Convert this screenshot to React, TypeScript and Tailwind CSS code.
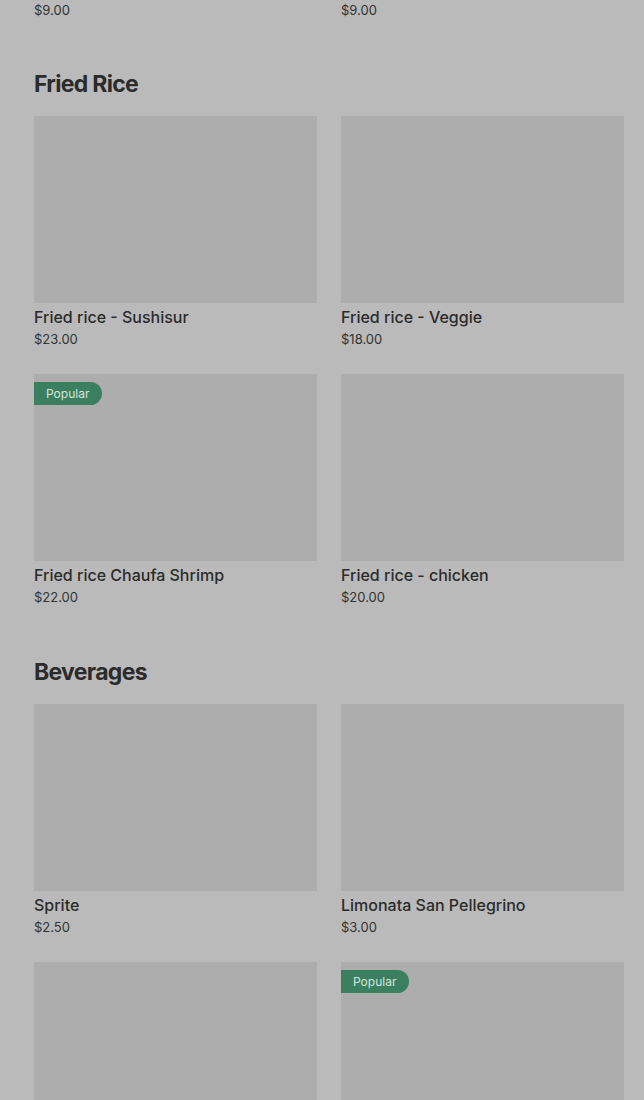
type Item = {
  name: string;
  price: string;
  popular?: boolean;
};

type Section = {
  title?: string;
  items: Item[];
};

const sections: Section[] = [
  {
    items: [
      { name: "Miso soup", price: "$9.00" },
      { name: "Seaweed salad", price: "$9.00" },
    ],
  },
  {
    title: "Fried Rice",
    items: [
      { name: "Fried rice - Sushisur", price: "$23.00" },
      { name: "Fried rice - Veggie", price: "$18.00" },
      { name: "Fried rice Chaufa Shrimp", price: "$22.00", popular: true },
      { name: "Fried rice - chicken", price: "$20.00" },
    ],
  },
  {
    title: "Beverages",
    items: [
      { name: "Sprite", price: "$2.50" },
      { name: "Limonata San Pellegrino", price: "$3.00" },
      { name: "Coca-Cola", price: "$2.50" },
      { name: "Perrier", price: "$3.00", popular: true },
    ],
  },
];

const MenuCard = ({ item }: { item: Item }) => (
  <div className="flex flex-col">
    <div className="relative h-[187px] bg-[#adadad]">
      {item.popular && (
        <span className="absolute left-0 top-2 flex h-[23px] items-center rounded-r-full bg-[#3a8060] pl-3 pr-[13px] text-[12px] text-[#d6e5dc]">
          Popular
        </span>
      )}
    </div>
    <p className="mt-0.5 text-[16px] leading-6 font-medium text-[#2b2b2b]">
      {item.name}
    </p>
    <p className="text-[13px] leading-5 text-[#333333]">{item.price}</p>
  </div>
);

export default function App() {
  return (
    <div
      className="min-h-[1100px] overflow-hidden bg-[#bababa] pl-[34px] pr-[20px]"
      style={{ fontFamily: "Inter, 'Noto Sans', sans-serif" }}
    >
      {/* page is scrolled: the previous section's last row sits above the fold */}
      <div className="-mt-[213px]">
        {sections.map((section, i) => (
          <section key={i} className={i > 0 ? "pt-[48px] last:pt-[49px]" : ""}>
            {section.title && (
              <h2 className="mb-4 text-[23px] leading-8 font-bold tracking-[-0.03em] text-[#2b2b2b]">
                {section.title}
              </h2>
            )}
            <div className="grid grid-cols-2 gap-x-6 gap-y-[25px]">
              {section.items.map((item) => (
                <MenuCard key={item.name} item={item} />
              ))}
            </div>
          </section>
        ))}
      </div>
    </div>
  );
}
